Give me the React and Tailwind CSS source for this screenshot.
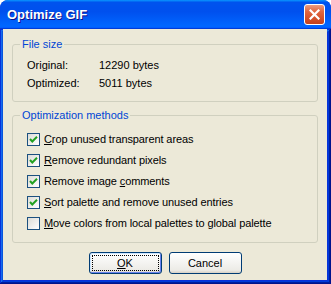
import React, { useState } from "react";

function CloseButton() {
  return (
    <button className="w-[21px] h-[21px] rounded-[3px] border border-white bg-[linear-gradient(180deg,#ec9b80_0%,#e0663f_35%,#d4512a_70%,#c3401c_100%)] flex items-center justify-center">
      <svg width="11" height="11" viewBox="0 0 11 11">
        <path d="M1.5 1.5L9.5 9.5M9.5 1.5L1.5 9.5" stroke="#fff" strokeWidth="2.2" strokeLinecap="square" />
      </svg>
    </button>
  );
}

function Checkbox({ checked, onChange, children }) {
  return (
    <label className="flex items-center h-[13px] gap-[4px] cursor-default" onClick={onChange}>
      <span className="w-[13px] h-[13px] border border-[#1c5180] bg-[linear-gradient(135deg,#dcdcd7_0%,#fff_100%)] flex items-center justify-center">
        {checked && (
          <svg width="9" height="9" viewBox="0 0 9 9">
            <path d="M1 4L3.3 6.5L8 1.8" fill="none" stroke="#21a121" strokeWidth="2" />
          </svg>
        )}
      </span>
      <span className="leading-[13px] tracking-[-0.1px]">{children}</span>
    </label>
  );
}

function GroupBox({ title, children, className }) {
  return (
    <fieldset className={"border border-[#d0d0bf] rounded-[3px] pl-[7px] pr-[7px] " + className}>
      <legend className="px-[2px] leading-[13px] text-[#0046d5]">{title}</legend>
      {children}
    </fieldset>
  );
}

function App() {
  const [opts, setOpts] = useState([true, true, true, true, false]);

  const toggle = (i) => {
    const next = [...opts];
    next[i] = !next[i];
    setOpts(next);
  };

  return (
    <div className="w-[331px] h-[284px] flex flex-col rounded-t-[8px] overflow-hidden bg-[#0831d9] font-['Liberation_Sans',Arial,sans-serif] text-[11px] text-black">
      {/* title bar */}
      <div className="h-[29px] shrink-0 flex items-center justify-between pl-[7px] pr-[6px] bg-[linear-gradient(180deg,#0997ff_0%,#0053ee_8%,#0050ee_40%,#0066ff_88%,#0066ff_93%,#005bff_95%,#003dd7_96%,#003dd7_100%)]">
        <span className="text-white font-bold text-[13px] [text-shadow:1px_1px_#0f1089]">Optimize GIF</span>
        <CloseButton />
      </div>

      <div className="flex-1 flex pl-[3px] pr-[4px] pb-[4px] shadow-[inset_-1px_-1px_#00138c,inset_1px_1px_#0831d9,inset_-2px_-2px_#001ea0,inset_2px_2px_#166aee,inset_-3px_-3px_#003bda,inset_3px_3px_#0855dd]">
        <div className="flex-1 bg-[#ece9d8] px-[9px] pt-[9px] flex flex-col">
          <GroupBox title="File size" className="pb-[11px]">
            <div className="ml-[7px] mt-[8px] flex flex-col gap-[5px] leading-[13px]">
              <div className="flex">
                <span className="w-[72px]">Original:</span>
                <span>12290 bytes</span>
              </div>
              <div className="flex">
                <span className="w-[72px]">Optimized:</span>
                <span>5011 bytes</span>
              </div>
            </div>
          </GroupBox>

          <GroupBox title="Optimization methods" className="mt-[7px] pb-[12px]">
            <div className="ml-[7px] mt-[11px] flex flex-col gap-[8px]">
              <Checkbox checked={opts[0]} onChange={() => toggle(0)}>
                <u>C</u>rop unused transparent areas
              </Checkbox>
              <Checkbox checked={opts[1]} onChange={() => toggle(1)}>
                <u>R</u>emove redundant pixels
              </Checkbox>
              <Checkbox checked={opts[2]} onChange={() => toggle(2)}>
                Remove image <u>c</u>omments
              </Checkbox>
              <Checkbox checked={opts[3]} onChange={() => toggle(3)}>
                <u>S</u>ort palette and remove unused entries
              </Checkbox>
              <Checkbox checked={opts[4]} onChange={() => toggle(4)}>
                <u>M</u>ove colors from local palettes to global palette
              </Checkbox>
            </div>
          </GroupBox>

          <div className="flex justify-center gap-[7px] mt-[9px]">
            <button className="w-[73px] h-[22px] rounded-[3px] border border-[#003c74] bg-[linear-gradient(180deg,#fff_0%,#ecebe6_86%,#d6d0c5_100%)] shadow-[inset_-1px_-1px_#6982ee,inset_1px_1px_#cee7ff] p-[2px]">
              <span className="flex items-center justify-center w-full h-full border border-dotted border-black">
                <u>O</u>K
              </span>
            </button>
            <button className="w-[73px] h-[22px] rounded-[3px] border border-[#003c74] bg-[linear-gradient(180deg,#fff_0%,#ecebe6_86%,#d6d0c5_100%)]">
              Cancel
            </button>
          </div>
        </div>
      </div>
    </div>
  );
}

export default App;
